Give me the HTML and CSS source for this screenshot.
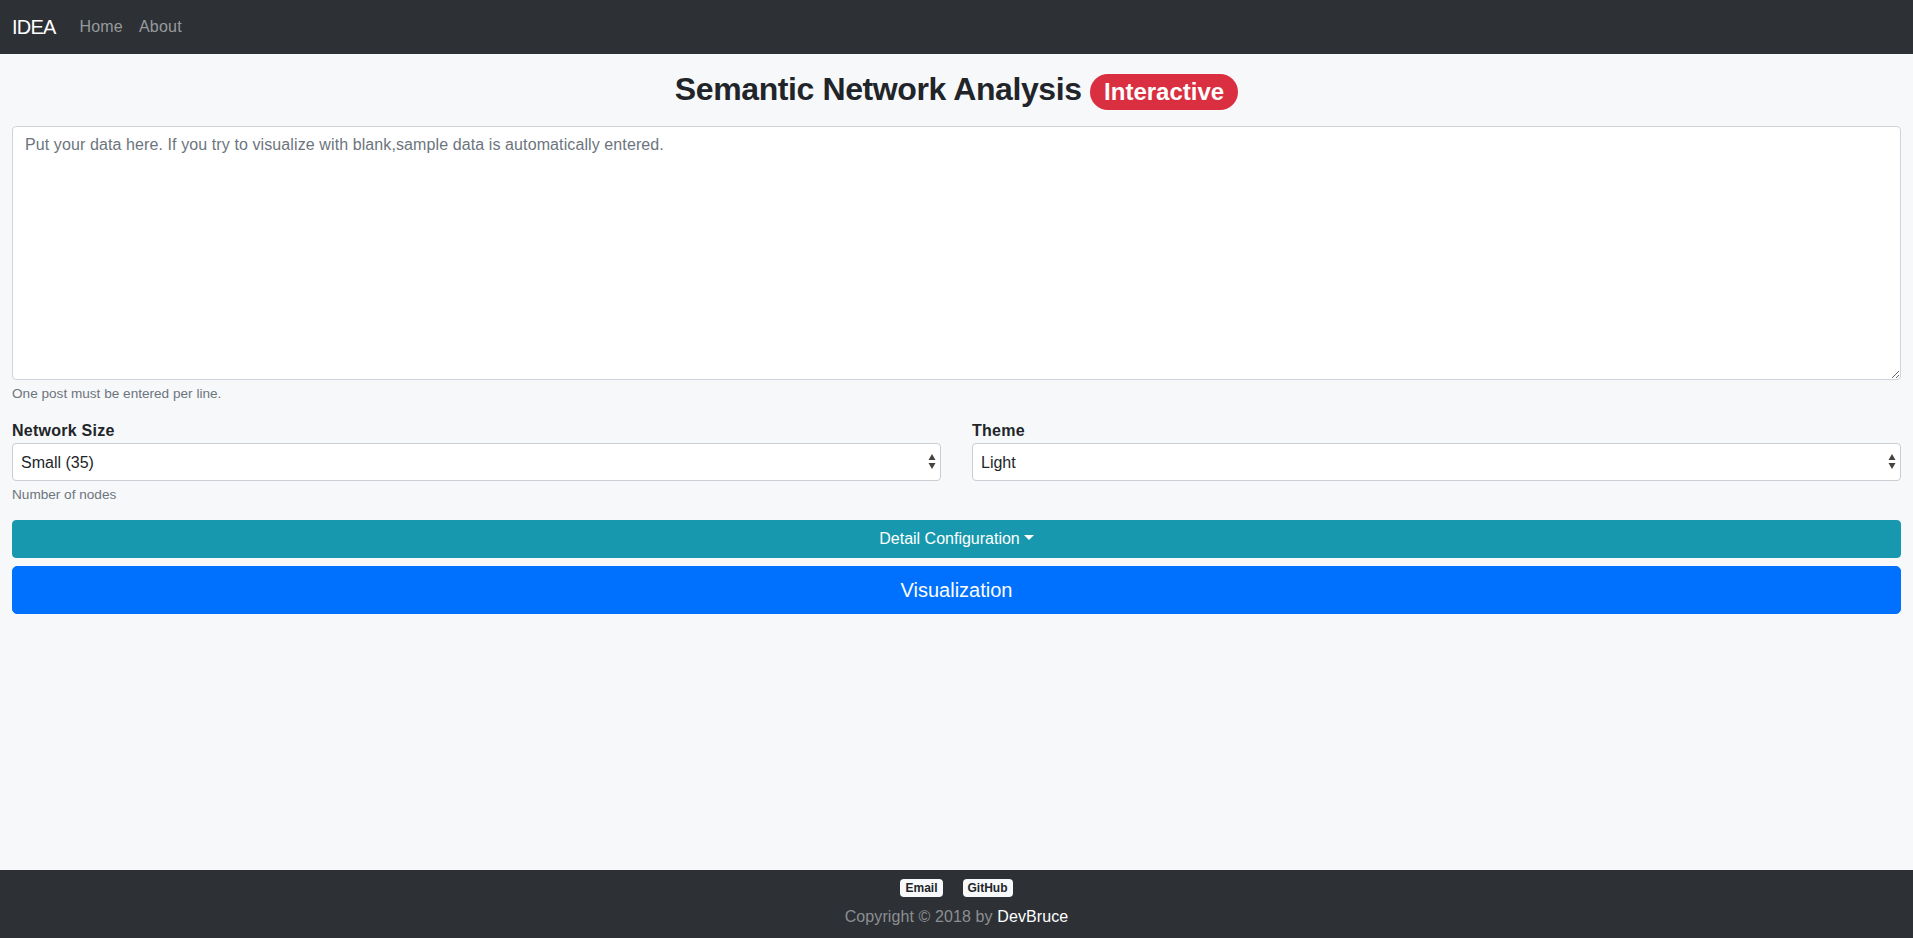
FILE: index.html
```html
<!DOCTYPE html>
<html lang="en">
<head>
<meta charset="utf-8">
<title>Semantic Network Analysis</title>
<link rel="stylesheet" href="styles.css">
</head>
<body>
<nav class="navbar">
  <a class="brand" href="#">IDEA</a>
  <ul class="nav">
    <li><a class="nav-link" href="#">Home</a></li>
    <li><a class="nav-link" href="#">About</a></li>
  </ul>
</nav>
<main class="container">
  <h2 class="title">Semantic Network Analysis <span class="badge-pill">Interactive</span></h2>
  <div class="form-group">
    <textarea class="form-control" placeholder="Put your data here. If you try to visualize with blank,sample data is automatically entered."></textarea>
    <small class="form-text">One post must be entered per line.</small>
  </div>
  <div class="form-row">
    <div class="col">
      <label class="label">Network Size</label>
      <div class="select-wrap">
        <select class="select"><option>Small (35)</option><option>Medium</option><option>Large</option></select>
        <svg class="arrows" width="8" height="15" viewBox="0 0 8 15"><path d="M4 0 L7.5 6 L0.5 6 Z M4 15 L7.5 9 L0.5 9 Z" fill="#444"/></svg>
      </div>
      <small class="form-text">Number of nodes</small>
    </div>
    <div class="col">
      <label class="label">Theme</label>
      <div class="select-wrap">
        <select class="select"><option>Light</option><option>Dark</option></select>
        <svg class="arrows" width="8" height="15" viewBox="0 0 8 15"><path d="M4 0 L7.5 6 L0.5 6 Z M4 15 L7.5 9 L0.5 9 Z" fill="#444"/></svg>
      </div>
    </div>
  </div>
  <button class="btn btn-info dropdown-toggle" type="button">Detail Configuration</button>
  <button class="btn btn-primary btn-lg" type="button">Visualization</button>
</main>
<footer class="footer">
  <div class="links">
    <a class="badge" href="#">Email</a>
    <a class="badge" href="#">GitHub</a>
  </div>
  <div class="copyright">Copyright © 2018 by <span class="author">DevBruce</span></div>
</footer>
</body>
</html>
```
FILE: styles.css
```css
* { box-sizing: border-box; }
html, body { height: 100%; }
body {
  margin: 0;
  font-family: "Liberation Sans", Arial, sans-serif;
  font-size: 16px;
  line-height: 24px;
  color: #212529;
  background: #f7f8fa;
  display: flex;
  flex-direction: column;
  min-height: 100vh;
}
.navbar {
  height: 54px;
  background: #2d3135;
  display: flex;
  align-items: center;
  padding: 0 12px;
  flex-shrink: 0;
}
.brand {
  color: #fff;
  font-size: 20px;
  line-height: 30px;
  letter-spacing: -0.8px;
  text-decoration: none;
  margin-right: 16px;
}
.nav {
  list-style: none;
  margin: 0;
  padding: 0;
  display: flex;
}
.nav-link {
  display: block;
  padding: 0 8px;
  color: #979a9d;
  text-decoration: none;
  font-size: 16px;
  line-height: 24px;
  letter-spacing: 0.2px;
}
.container {
  padding: 16px 12px 0;
  flex: 1 0 auto;
}
.title {
  margin: 0 0 16px;
  text-align: center;
  font-size: 32px;
  line-height: 38.4px;
  font-weight: 700;
  letter-spacing: -0.4px;
  color: #212529;
}
.badge-pill {
  display: inline-block;
  background: #d92f40;
  color: #fff;
  font-size: 24px;
  line-height: 24px;
  font-weight: 700;
  letter-spacing: 0;
  padding: 6px 14px;
  border-radius: 240px;
}
.form-group { margin-bottom: 16px; }
.form-control {
  display: block;
  width: 100%;
  height: 254px;
  padding: 6px 12px;
  font-family: inherit;
  font-size: 16px;
  line-height: 24px;
  letter-spacing: 0.1px;
  color: #495057;
  background: #fff;
  border: 1px solid #ced4da;
  border-radius: 4px;
  margin: 0;
}
.form-control::placeholder { color: #6c757d; opacity: 1; }
.form-text {
  display: block;
  margin-top: 4px;
  font-size: 13.6px;
  line-height: 19.2px;
  color: #6c757d;
}
.form-row {
  display: grid;
  grid-template-columns: 1fr 1fr;
  column-gap: 31px;
  margin-bottom: 16px;
}
.label {
  display: block;
  font-weight: 700;
  font-size: 16px;
  line-height: 24px;
  letter-spacing: 0.25px;
}
.select-wrap { position: relative; }
.select {
  display: block;
  width: 100%;
  height: 38px;
  appearance: none;
  -webkit-appearance: none;
  padding: 0 24px 0 8px;
  font-family: inherit;
  font-size: 16px;
  color: #212529;
  background: #fff;
  border: 1px solid #c9ced4;
  border-radius: 4px;
  margin: 0;
}
.arrows {
  position: absolute;
  right: 5px;
  top: 11px;
  pointer-events: none;
}
.btn {
  display: block;
  width: 100%;
  border: 1px solid transparent;
  color: #fff;
  font-family: inherit;
  text-align: center;
  cursor: pointer;
}
.btn-info {
  height: 38px;
  padding: 6px 12px;
  font-size: 16px;
  line-height: 24px;
  background: #1798ae;
  border-color: #1798ae;
  border-radius: 4px;
}
.dropdown-toggle::after {
  content: "";
  display: inline-block;
  margin-left: 4px;
  vertical-align: 4px;
  border-top: 5px solid #fff;
  border-left: 5px solid transparent;
  border-right: 5px solid transparent;
}
.btn-primary {
  background: #0070ff;
  border-color: #0070ff;
}
.btn-lg {
  margin-top: 8px;
  height: 48px;
  padding: 8px 16px;
  font-size: 20px;
  line-height: 30px;
  border-radius: 5px;
}
.footer {
  background: #2d3135;
  text-align: center;
  padding: 9px 0 9px;
  flex-shrink: 0;
}
.links {
  display: flex;
  justify-content: center;
  gap: 20px;
}
.badge {
  display: inline-block;
  background: #f8f9fa;
  color: #212529;
  font-size: 12px;
  line-height: 12px;
  font-weight: 700;
  padding: 3px 5px;
  border-radius: 4px;
  text-decoration: none;
}
.copyright {
  margin-top: 8px;
  font-size: 16px;
  line-height: 24px;
  letter-spacing: 0.1px;
  color: #8c8f92;
}
.author { color: #fff; }
```
